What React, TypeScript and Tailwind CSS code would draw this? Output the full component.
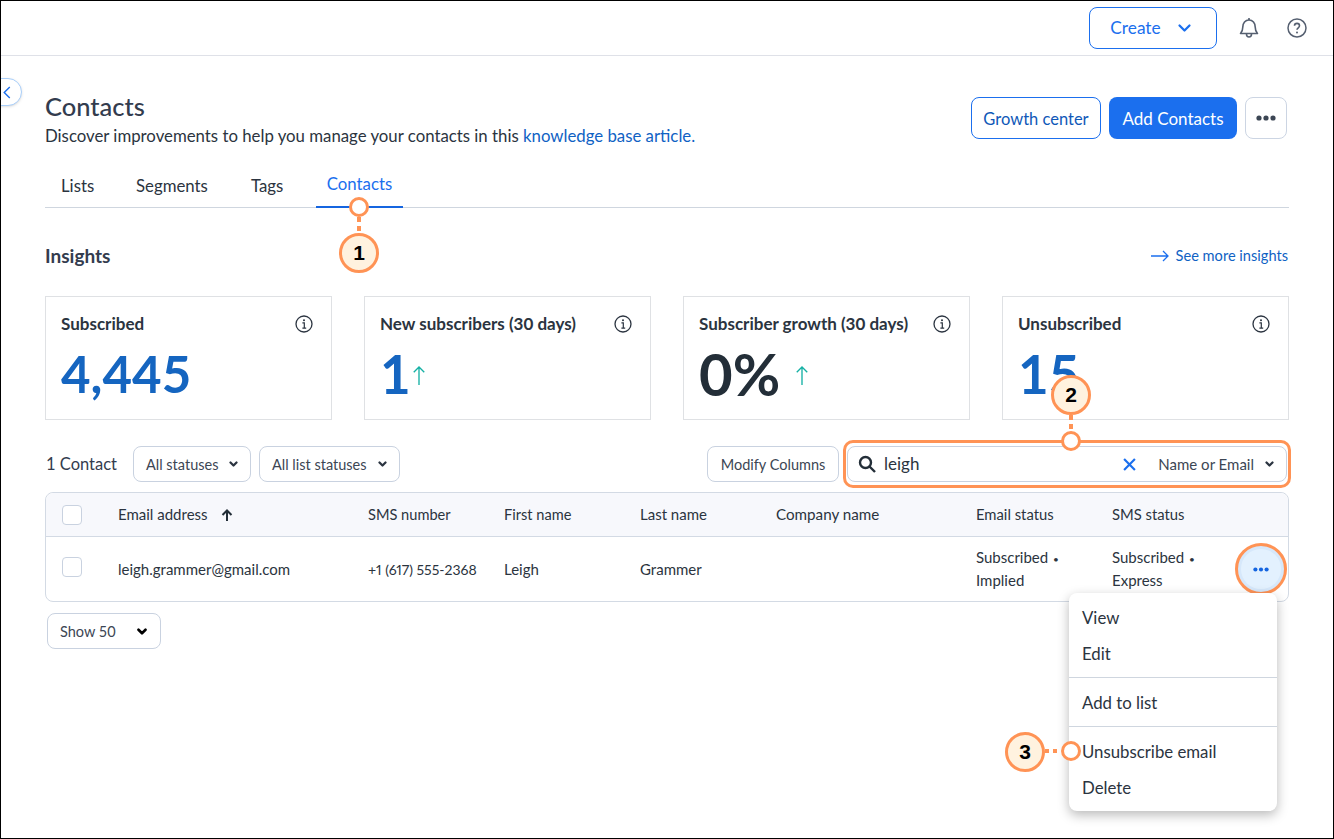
import React from "react";

const Chevron = ({ className = "", w = 3 }: { className?: string; w?: number }) => (
  <svg viewBox="0 0 12 8" className={className} fill="none" stroke="currentColor" strokeWidth={w} strokeLinecap="round" strokeLinejoin="round">
    <path d="M2 2l4 4 4-4" />
  </svg>
);

const Dots = ({ className = "" }: { className?: string }) => (
  <svg viewBox="0 0 20 6" className={className} fill="currentColor">
    <circle cx="3" cy="3" r="2.6" />
    <circle cx="10" cy="3" r="2.6" />
    <circle cx="17" cy="3" r="2.6" />
  </svg>
);

const Info = () => (
  <svg viewBox="0 0 18 18" className="h-[18px] w-[18px] shrink-0 text-[#2b3440]" fill="none" stroke="currentColor">
    <circle cx="9" cy="9" r="8" strokeWidth="1.3" />
    <circle cx="9" cy="5.2" r="1" fill="currentColor" stroke="none" />
    <path d="M7.4 7.8H9.3V13M7.4 13.2h3.8" strokeWidth="1.2" />
  </svg>
);

const UpArrow = ({ className }: { className: string }) => (
  <svg viewBox="0 0 14 22" className={`mt-[3px] h-[21px] w-[14px] text-[#14b0a4] ${className}`} fill="none" stroke="currentColor" strokeWidth="1.4">
    <path d="M7 21V2M1.500 7.500L7 2l5.500 5.500" />
  </svg>
);

const Card = ({ title, value, arrow, size, color }: { title: string; value: string; arrow?: string; size: string; color: string }) => (
  <div className="h-[124px] w-[287px] border border-[#dfe1e4] bg-white px-[15px] pt-[16px]">
    <div className="flex h-[22px] items-center justify-between pr-[3px] text-[17px] font-bold leading-[22px] text-[#2b3440]">
      <span>{title}</span>
      <Info />
    </div>
    <div className="mt-[7px] flex h-[64px] items-center">
      <span className={`font-bold leading-[64px] ${size} ${color}`}>{value}</span>
      {arrow && <UpArrow className={arrow} />}
    </div>
  </div>
);

const Select = ({ label, className = "" }: { label: string; className?: string }) => (
  <div className={`flex h-[36px] items-center justify-between rounded-[8px] border border-[#c9d2e0] bg-white pl-[12px] pr-[12px] text-[14.5px] text-[#3c4654] ${className}`}>
    <span className="pt-[1px]">{label}</span>
    <Chevron className="h-[6px] w-[9px] text-[#2b3440]" />
  </div>
);

const Marker = ({ className }: { className: string }) => (
  <div className={`absolute h-[20px] w-[20px] rounded-full border-[3px] border-[#ff9355] bg-white ${className}`} />
);

const Badge = ({ n, className }: { n: string; className: string }) => (
  <div className={`absolute flex h-[40px] w-[40px] items-center justify-center rounded-full border-[3px] border-[#ff9355] bg-[#fff2df] text-[21px] font-bold text-black ${className}`} style={{ fontFamily: "'Liberation Sans', sans-serif" }}>
    {n}
  </div>
);

const Th = ({ className, children }: { className: string; children: React.ReactNode }) => (
  <div className={`shrink-0 ${className}`}>{children}</div>
);

const Bullet = () => <span className="ml-[1px] text-[10px]">•</span>;

const MenuItem = ({ label, className = "" }: { label: string; className?: string }) => (
  <div className={`flex h-[36px] items-center pl-[13px] pt-[2px] ${className}`}>{label}</div>
);

export default function App() {
  return (
    <div className="relative h-[839px] w-[1334px] overflow-hidden border border-black bg-white text-[#2b3440]" style={{ fontFamily: "Lato, 'Noto Sans', sans-serif" }}>
      <header className="flex h-[55px] items-center justify-end border-b border-[#dfe1e8] pr-[26px]">
        <div className="flex h-[42px] w-[128px] items-center justify-center gap-[16px] rounded-[8px] border border-[#1b6fee] pr-[4px] text-[17.3px] text-[#1b6fee]">
          <span>Create</span>
          <Chevron className="h-[10px] w-[15px]" w={1.8} />
        </div>
        <svg viewBox="0 0 20 22" className="ml-[22px] h-[22px] w-[20px] text-[#555f70]" fill="none" stroke="currentColor" strokeWidth="1.6" strokeLinejoin="round">
          <path d="M1.500 16.500c1.500-1.500 2.300-2.500 2.300-6.500 0-3.800 2.500-7 6.200-7s6.200 3.200 6.200 7c0 4 .8 5 2.300 6.500z" />
          <path d="M10 1v2M7.500 17c0 4 5 4 5 0" />
        </svg>
        <svg viewBox="0 0 20 20" className="ml-[28px] h-[20px] w-[20px] text-[#555f70]" fill="none" stroke="currentColor" strokeWidth="1.5">
          <circle cx="10" cy="10" r="9" />
          <path d="M7.500 7.800c0-3.300 5-3.300 5 0 0 2-2.500 2-2.500 4" strokeWidth="1.600" />
          <circle cx="10" cy="14.500" r="1" fill="currentColor" stroke="none" />
        </svg>
      </header>

      <button className="absolute left-[-20px] top-[77px] flex h-[28px] w-[41px] items-center justify-end rounded-full border border-[#a9cffa] bg-white pr-[10px] text-[#1b6fee] shadow-sm">
        <svg viewBox="0 0 8 14" className="h-[13px] w-[8px]" fill="none" stroke="currentColor" strokeWidth="1.500"><path d="M7 1L1 7l6 6" /></svg>
      </button>

      <main className="px-[44px]">
        <section className="flex items-start justify-between pt-[35px]">
          <div>
            <h1 className="text-[25.5px] font-medium leading-[30px] text-[#333c4e]">Contacts</h1>
            <p className="mt-[3px] text-[16.8px] leading-[24px] text-[#2b3440]">
              Discover improvements to help you manage your contacts in this <span className="text-[#0f62c4]">knowledge base article.</span>
            </p>
          </div>
          <div className="mr-[2px] mt-[6px] flex gap-[8px] text-[16.5px]">
            <div className="flex h-[42px] w-[130px] items-center justify-center rounded-[8px] border border-[#1b6fee] pt-[2px] text-[#0f58b8]">Growth center</div>
            <div className="flex h-[42px] w-[128px] items-center justify-center rounded-[8px] bg-[#1b6fee] pt-[1px] text-[17px] text-white">Add Contacts</div>
            <div className="flex h-[42px] w-[42px] items-center justify-center rounded-[8px] border border-[#ccd5e3] text-[#3c4654]">
              <Dots className="h-[6px] w-[20px]" />
            </div>
          </div>
        </section>

        <nav className="mt-[22px] flex h-[38px] items-end border-b border-[#cfd6df] text-[16.8px]">
          <div className="mb-[9px] ml-[16px] w-[33px]">Lists</div>
          <div className="mb-[9px] ml-[42px] w-[73px]">Segments</div>
          <div className="mb-[9px] ml-[42px] w-[34px]">Tags</div>
          <div className="relative -mb-px ml-[31px] h-[38px] w-[87px] border-b-2 border-[#1565e0] pt-[1px] text-center text-[#1b6fee]">Contacts</div>
        </nav>

        <section className="mt-[36px] flex h-[24px] items-center justify-between">
          <h2 className="text-[19px] font-bold text-[#333c4e]">Insights</h2>
          <div className="flex items-center gap-[7px] pr-[1px] text-[14.6px] text-[#0f62c4]">
            <svg viewBox="0 0 18 12" className="h-[12px] w-[18px] text-[#1b6fee]" fill="none" stroke="currentColor" strokeWidth="1.300"><path d="M0 6h17M12 1l5 5-5 5" /></svg>
            See more insights
          </div>
        </section>

        <section className="mt-[28px] flex justify-between">
          <Card title="Subscribed" value="4,445" size="text-[51px]" color="text-[#1565c0]" />
          <Card title="New subscribers (30 days)" value="1" arrow="ml-[1px]" size="text-[53px]" color="text-[#1565c0]" />
          <Card title="Subscriber growth (30 days)" value="0%" arrow="ml-[15px]" size="text-[58px]" color="text-[#232e38]" />
          <Card title="Unsubscribed" value="15" size="text-[53px]" color="text-[#1565c0]" />
        </section>

        <section className="mr-[2px] mt-[26px] flex h-[36px] items-center">
          <span className="ml-[1px] w-[87px] text-[16.5px] text-[#333c4e]">1 Contact</span>
          <Select label="All statuses" className="w-[118px]" />
          <Select label="All list statuses" className="ml-[8px] w-[141px]" />
          <div className="ml-auto flex h-[36px] w-[132px] items-center justify-center rounded-[8px] border border-[#c9d2e0] pt-[1px] text-[14.5px] text-[#3c4654]">Modify Columns</div>
          <div className="relative ml-[8px] flex h-[36px] w-[440px] items-center rounded-[8px] border border-[#c9d2e0] bg-white pl-[10px] pr-[12px]">
            <svg viewBox="0 0 18 18" className="h-[18px] w-[18px] text-[#232e38]" fill="none" stroke="currentColor" strokeWidth="2.400"><circle cx="7.500" cy="7.500" r="5.500" /><path d="M11.500 11.500L17 17" /></svg>
            <span className="ml-[8px] text-[17px] text-[#2b3440]">leigh</span>
            <svg viewBox="0 0 12 12" className="ml-auto h-[13px] w-[13px] text-[#1b6fee]" fill="none" stroke="currentColor" strokeWidth="2"><path d="M1 1l10 10M11 1L1 11" /></svg>
            <span className="ml-[22px] text-[15px] text-[#3c4654]">Name or Email</span>
            <Chevron className="ml-[11px] h-[6px] w-[9px] text-[#2b3440]" />
          </div>
        </section>

        <section className="mt-[10px] h-[110px] rounded-[8px] border border-[#d3dae4] text-[15px]">
          <div className="flex h-[44px] items-center rounded-t-[8px] border-b border-[#d3dae4] bg-[#f7f8fc] pl-[16px]">
            <Th className="h-[20px] w-[20px] rounded-[4px] border border-[#c9d2e0] bg-white"> </Th>
            <Th className="ml-[36px] flex w-[250px] items-center">
              Email address
              <svg viewBox="0 0 12 12" className="ml-[13px] h-[12px] w-[12px] text-[#232e38]" fill="none" stroke="currentColor" strokeWidth="2"><path d="M6 12V2M1.500 6L6 1.500 10.500 6" /></svg>
            </Th>
            <Th className="w-[136px] text-[14.6px]">SMS number</Th>
            <Th className="w-[136px] text-[14.6px]">First name</Th>
            <Th className="w-[136px]">Last name</Th>
            <Th className="w-[200px] text-[15.2px]">Company name</Th>
            <Th className="w-[136px] text-[14.8px]">Email status</Th>
            <Th className="w-[100px] text-[14.8px]">SMS status</Th>
          </div>
          <div className="flex h-[64px] items-center pl-[16px]">
            <Th className="mb-[4px] h-[20px] w-[20px] rounded-[4px] border border-[#c9d2e0] bg-white"> </Th>
            <Th className="ml-[36px] w-[250px]">leigh.grammer@gmail.com</Th>
            <Th className="w-[136px] text-[14px] proportional-nums">+1 (617) 555-2368</Th>
            <Th className="w-[136px]">Leigh</Th>
            <Th className="w-[136px]">Grammer</Th>
            <Th className="w-[200px]"> </Th>
            <Th className="w-[136px] leading-[21px]">Subscribed <Bullet /><br />Implied</Th>
            <Th className="w-[100px] leading-[21px]">Subscribed <Bullet /><br />Express</Th>
          </div>
        </section>

        <div className="ml-[2px] mt-[11px] flex h-[36px] w-[114px] items-center justify-between rounded-[8px] border border-[#c9d2e0] pl-[12px] pr-[12px] text-[14.5px] text-[#3c4654]">
          <span className="pt-[2px]">Show 50</span>
          <Chevron className="h-[7px] w-[12px] text-black" />
        </div>
      </main>

      {/* overlays */}
      <div className="absolute left-[1234px] top-[542px] flex h-[52px] w-[52px] items-center justify-center rounded-full border-[3px] border-[#ff9355] bg-[#d6e8fb]">
        <div className="flex h-[40px] w-[40px] items-center justify-center rounded-full bg-[#e3f1fe] text-[#1565e0]">
          <Dots className="h-[5px] w-[16px]" />
        </div>
      </div>

      <div className="absolute left-[1068px] top-[592px] w-[208px] rounded-[8px] bg-white pb-[6px] pt-[6px] text-[16.8px] text-[#2b3440] shadow-[0_4px_12px_rgba(0,0,0,0.28)]">
        <MenuItem label="View" />
        <MenuItem label="Edit" />
        <div className="mt-[6px] border-t border-[#cfd6df]" />
        <MenuItem label="Add to list" className="mt-[6px]" />
        <div className="mt-[6px] border-t border-[#cfd6df]" />
        <MenuItem label="Unsubscribe email" className="mt-[6px]" />
        <MenuItem label="Delete" />
      </div>

      {/* annotation 1 */}
      <Marker className="left-[348px] top-[196px]" />
      <div className="absolute left-[356px] top-[216px] h-[16px] w-[4px] bg-[repeating-linear-gradient(to_bottom,#ff9355_0,#ff9355_5px,transparent_5px,transparent_9px)]" />
      <Badge n="1" className="left-[338px] top-[232px]" />

      {/* annotation 2 */}
      <div className="absolute left-[842px] top-[439px] h-[48px] w-[448px] rounded-[10px] border-[3px] border-[#ff9355]" />
      <Marker className="left-[1060px] top-[430px]" />
      <div className="absolute left-[1068px] top-[414px] h-[16px] w-[4px] bg-[repeating-linear-gradient(to_bottom,#ff9355_0,#ff9355_5px,transparent_5px,transparent_9px)]" />
      <Badge n="2" className="left-[1050px] top-[374px]" />

      {/* annotation 3 */}
      <Badge n="3" className="left-[1004px] top-[731px]" />
      <div className="absolute left-[1044px] top-[748px] h-[4px] w-[16px] bg-[repeating-linear-gradient(to_right,#ff9355_0,#ff9355_4px,transparent_4px,transparent_8px)]" />
      <Marker className="left-[1060px] top-[740px]" />
    </div>
  );
}
